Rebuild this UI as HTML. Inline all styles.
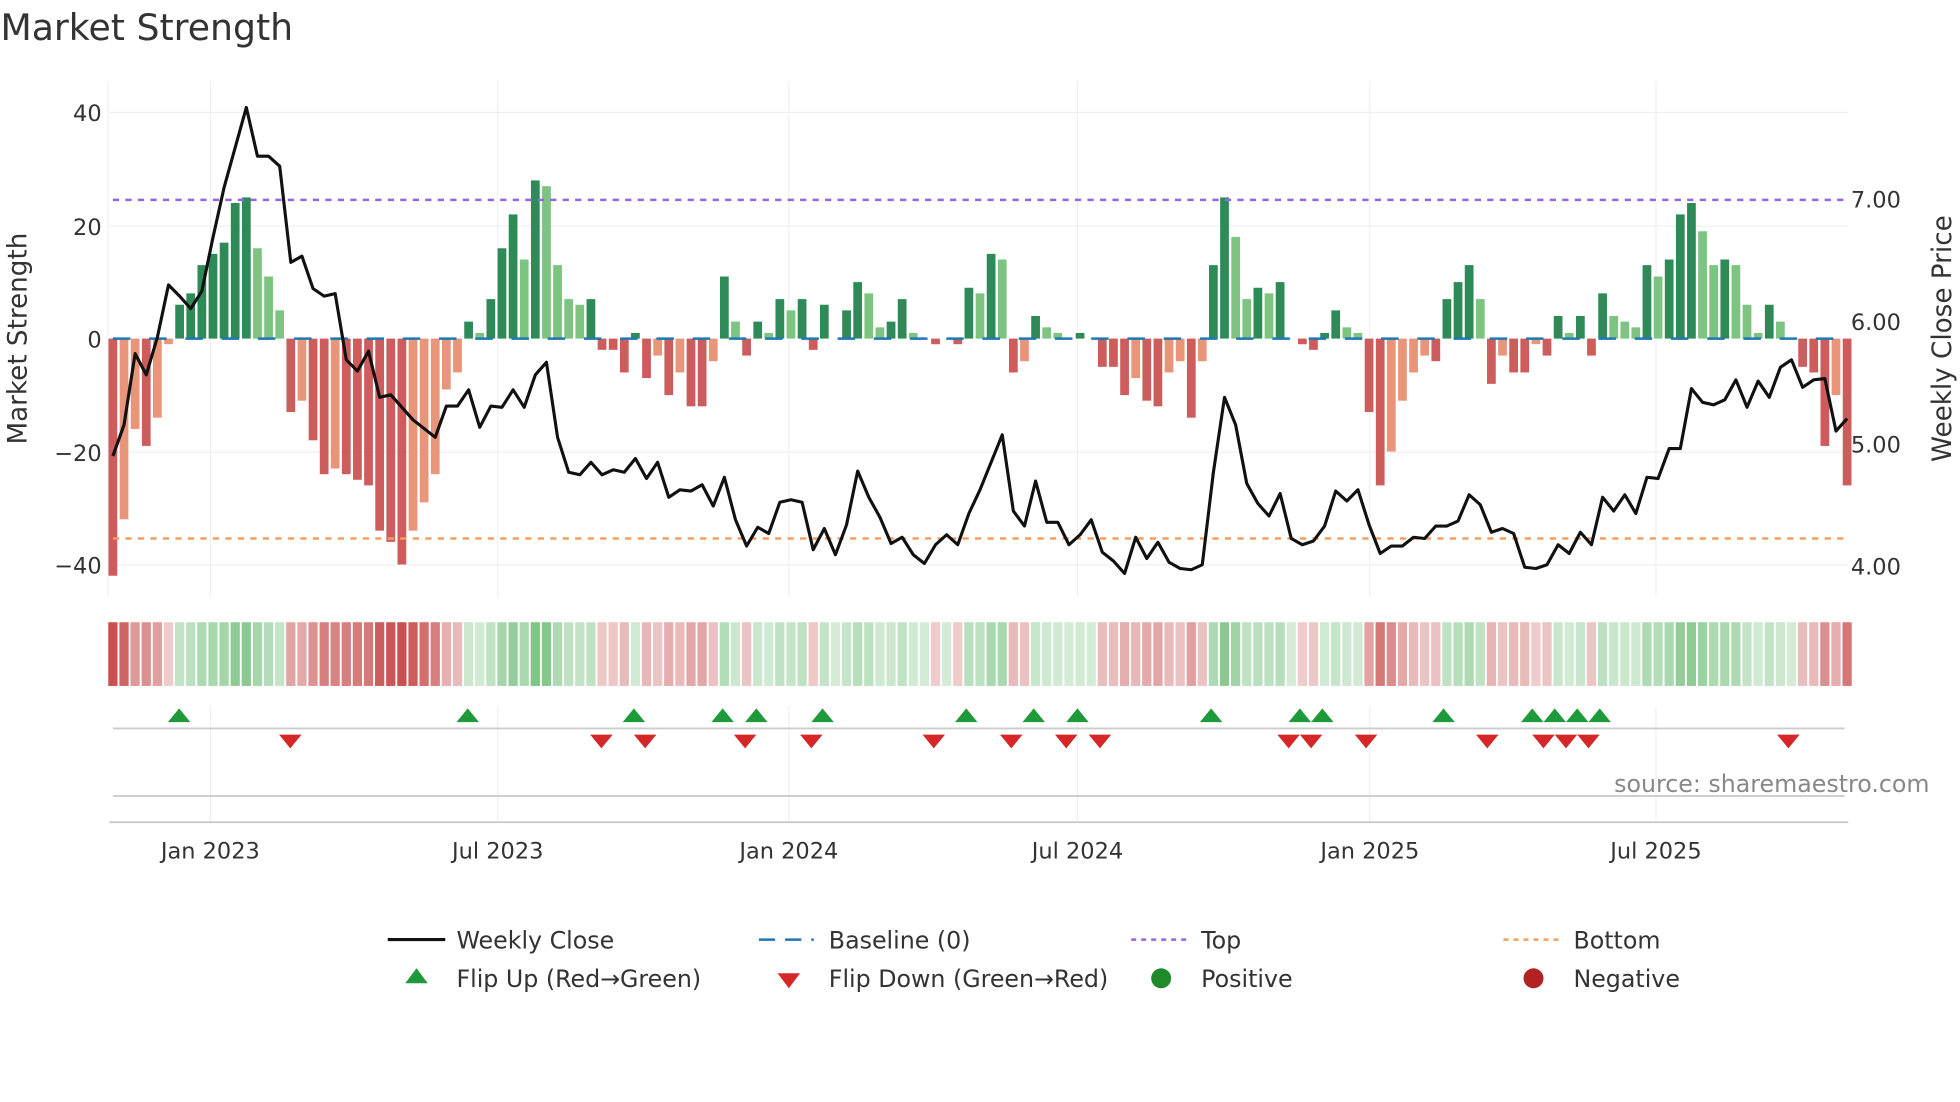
<!DOCTYPE html>
<html><head><meta charset="utf-8"><style>
html,body{margin:0;padding:0;background:#fff;width:1960px;height:1102px;overflow:hidden}
svg{display:block;font-family:"DejaVu Sans","Liberation Sans",sans-serif}
</style></head><body>
<svg id="s" width="1960" height="1102" viewBox="0 0 1568 882" xmlns="http://www.w3.org/2000/svg">
<rect width="1568" height="882" fill="#fff"/>
<text x="0" y="32" font-size="29" fill="#333">Market Strength</text>
<g stroke="#eef0f3" stroke-width="1">
<line x1="87" y1="90" x2="1479" y2="90"/><line x1="87" y1="181" x2="1479" y2="181"/>
<line x1="87" y1="362" x2="1479" y2="362"/><line x1="87" y1="452" x2="1479" y2="452"/>
<line x1="168" y1="65" x2="168" y2="478"/><line x1="398" y1="65" x2="398" y2="478"/>
<line x1="631" y1="65" x2="631" y2="478"/><line x1="862" y1="65" x2="862" y2="478"/>
<line x1="1096" y1="65" x2="1096" y2="478"/><line x1="1325" y1="65" x2="1325" y2="478"/>
<line x1="168" y1="565" x2="168" y2="658"/><line x1="398" y1="565" x2="398" y2="658"/>
<line x1="631" y1="565" x2="631" y2="658"/><line x1="862" y1="565" x2="862" y2="658"/>
<line x1="1096" y1="565" x2="1096" y2="658"/><line x1="1325" y1="565" x2="1325" y2="658"/>
<line x1="86" y1="65" x2="86" y2="478"/>
</g>
<g id="bars"></g>
<line x1="90" y1="271" x2="1478" y2="271" stroke="#1f77b4" stroke-width="2" stroke-dasharray="14,15"/>
<line x1="90" y1="160" x2="1478" y2="160" stroke="#9467e0" stroke-width="2" stroke-dasharray="5,5"/>
<line x1="90" y1="431" x2="1478" y2="431" stroke="#f0a060" stroke-width="2" stroke-dasharray="5,5"/>
<polyline id="price" fill="none" stroke="#111" stroke-width="2.5" stroke-linejoin="round"/>
<g id="heat"></g>
<g id="tri"></g>
<line x1="90" y1="583" x2="1476" y2="583" stroke="#ccc" stroke-width="1.5"/>
<line x1="90" y1="637" x2="1476" y2="637" stroke="#ccc" stroke-width="1.5"/>
<line x1="87" y1="658" x2="1479" y2="658" stroke="#ccc" stroke-width="1.5"/>
<text x="1544" y="634" font-size="19" fill="#888" text-anchor="end">source: sharemaestro.com</text>
<g font-size="18" fill="#333">
<text x="81" y="97" text-anchor="end">40</text>
<text x="81" y="188" text-anchor="end">20</text>
<text x="81" y="278" text-anchor="end">0</text>
<text x="81" y="369" text-anchor="end">−20</text>
<text x="81" y="459" text-anchor="end">−40</text>
<text x="1481" y="166">7.00</text>
<text x="1481" y="264">6.00</text>
<text x="1481" y="362">5.00</text>
<text x="1481" y="460">4.00</text>
<text x="168" y="687" text-anchor="middle">Jan 2023</text>
<text x="398" y="687" text-anchor="middle">Jul 2023</text>
<text x="631" y="687" text-anchor="middle">Jan 2024</text>
<text x="862" y="687" text-anchor="middle">Jul 2024</text>
<text x="1096" y="687" text-anchor="middle">Jan 2025</text>
<text x="1325" y="687" text-anchor="middle">Jul 2025</text>
</g>
<text transform="translate(21,271) rotate(-90)" font-size="21" fill="#333" text-anchor="middle">Market Strength</text>
<text transform="translate(1561,271) rotate(-90)" font-size="21" fill="#333" text-anchor="middle">Weekly Close Price</text>
<g font-size="19" fill="#333">
<line x1="310" y1="752" x2="356" y2="752" stroke="#111" stroke-width="2.5"/>
<text x="365" y="759">Weekly Close</text>
<line x1="607" y1="752" x2="651" y2="752" stroke="#1f77b4" stroke-width="2" stroke-dasharray="13,8"/>
<text x="663" y="759">Baseline (0)</text>
<line x1="905" y1="752" x2="949" y2="752" stroke="#9467e0" stroke-width="2" stroke-dasharray="4,4"/>
<text x="961" y="759">Top</text>
<line x1="1203" y1="752" x2="1247" y2="752" stroke="#f0a060" stroke-width="2" stroke-dasharray="4,4"/>
<text x="1259" y="759">Bottom</text>
<polygon points="333,775 342,787 324,787" fill="#1f9a3a"/>
<text x="365" y="790">Flip Up (Red→Green)</text>
<polygon points="622,779 640,779 631,791" fill="#d62728"/>
<text x="663" y="790">Flip Down (Green→Red)</text>
<circle cx="929" cy="783" r="8" fill="#1f8a2a"/>
<text x="961" y="790">Positive</text>
<circle cx="1227" cy="783" r="8" fill="#b22222"/>
<text x="1259" y="790">Negative</text>
</g>
</svg>
<script>
var v=[-42,-32,-16,-19,-14,-1,6,8,13,15,17,24,25,16,11,5,-13,-11,-18,-24,-23,-24,-25,-26,-34,-36,-40,-34,-29,-24,-9,-6,3,1,7,16,22,14,28,27,13,7,6,7,-2,-2,-6,1,-7,-3,-10,-6,-12,-12,-4,11,3,-3,3,1,7,5,7,-2,6,0,5,10,8,2,3,7,1,0,-1,0,-1,9,8,15,14,-6,-4,4,2,1,0,1,0,-5,-5,-10,-7,-11,-12,-6,-4,-14,-4,13,25,18,7,9,8,10,0,-1,-2,1,5,2,1,-13,-26,-20,-11,-6,-3,-4,7,10,13,7,-8,-3,-6,-6,-1,-3,4,1,4,-3,8,4,3,2,13,11,14,22,24,19,13,14,13,6,1,6,3,0,-5,-6,-19,-10,-26];
var p=[365,340,283,300,270,228,237,247,233,190,150,118,86,125,125,133,210,205,231,237,235,288,297,281,318,316,326,336,343,350,325,325,312,342,325,326,312,326,300,290,350,378,380,370,380,376,378,367,383,370,398,392,393,388,405,382,416,437,422,427,402,400,402,440,423,444,420,377,398,414,435,430,444,451,436,428,436,411,392,370,348,409,421,385,418,418,436,428,416,442,449,459,430,447,434,450,455,456,452,378,318,340,387,403,413,395,431,436,433,421,393,401,392,420,443,437,437,430,431,421,421,417,396,404,426,423,427,454,455,452,436,443,426,436,398,409,396,411,382,383,359,359,311,322,324,320,304,326,305,318,294,288,310,304,303,345,335,350];
p.splice(155,3,345,335,350);
var n=v.length,dx=(1478-90)/(n-1),b="",h="",pts=[];
function mix(c,t){return "rgb("+c.map(function(x){return Math.round(255+(x-255)*t)}).join(",")+")"}
for(var i=0;i<n;i++){var x=90+i*dx,val=v[i],pr=i?v[i-1]:0,y=271-val*4.52,col;
if(val>=0)col=(val>=pr)?"#2e8b57":"#7cc47f";else col=(val<=pr)?"#cd5c5c":"#e8957a";
if(val!=0)b+='<rect x="'+(x-3.5).toFixed(1)+'" y="'+Math.min(y,271).toFixed(1)+'" width="7" height="'+Math.abs(y-271).toFixed(1)+'" fill="'+col+'"/>';
var t=0.28+0.72*Math.min(Math.abs(val)/38,1);
var hc=val>=0?mix([100,185,110],t):mix([200,80,80],t);
h+='<rect x="'+(x-3.7).toFixed(1)+'" y="498" width="7.4" height="51" fill="'+hc+'"/>';
pts.push(x.toFixed(1)+","+p[i]);}
document.getElementById("bars").innerHTML=b;
document.getElementById("heat").innerHTML=h;
document.getElementById("price").setAttribute("points",pts.join(" "));
var up=[143,374,507,578,605,658,773,827,862,969,1040,1058,1155,1226,1244,1262,1280],dn=[232,481,516,596,649,747,809,853,880,1031,1049,1093,1190,1235,1253,1271,1431],t="";
up.forEach(function(x){t+='<polygon points="'+x+',567 '+(x+9)+',578 '+(x-9)+',578" fill="#1f9a3a"/>'});
dn.forEach(function(x){t+='<polygon points="'+(x-9)+',588 '+(x+9)+',588 '+x+',599" fill="#d62728"/>'});
document.getElementById("tri").innerHTML=t;
</script>
</body></html>
